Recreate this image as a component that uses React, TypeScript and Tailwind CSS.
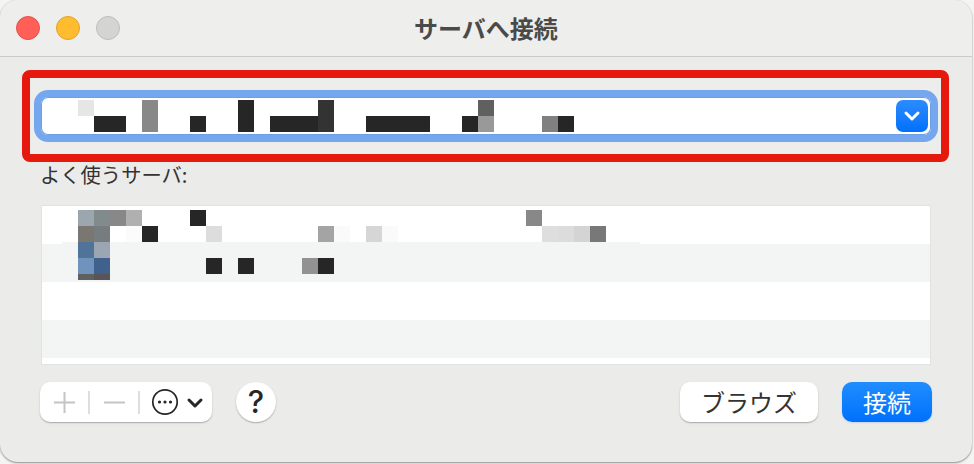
import { ChevronDown } from "lucide-react";

const DARK = "#262626";

// redacted server address, [x, y, width, colour] in 16px mosaic cells
const inputCells: [number, number, number, string][] = [
  [37, 3, 16, "#e6e6e6"],
  [101, 3, 16, "#888888"],
  [197, 3, 16, DARK],
  [277, 3, 16, "#333333"],
  [437, 3, 16, "#606060"],
  [53, 19, 32, DARK],
  [101, 19, 16, "#888888"],
  [149, 19, 16, DARK],
  [197, 19, 16, DARK],
  [229, 19, 48, DARK],
  [277, 19, 16, "#333333"],
  [325, 19, 64, DARK],
  [421, 19, 16, DARK],
  [437, 19, 16, "#999999"],
  [501, 19, 16, "#808080"],
  [517, 19, 16, DARK],
];

const listCells: [number, number, number, number, string][] = [
  [36, 4, 16, 16, "#9ca6ae"],
  [52, 4, 16, 16, "#828b8c"],
  [68, 4, 16, 16, "#888888"],
  [84, 4, 16, 16, "#b0b0b0"],
  [148, 4, 16, 16, DARK],
  [484, 4, 16, 16, "#888888"],
  [36, 20, 16, 16, "#7a7672"],
  [52, 20, 16, 16, "#767c80"],
  [84, 20, 16, 16, "#fbfbfb"],
  [100, 20, 16, 16, DARK],
  [164, 20, 16, 16, "#dddddd"],
  [276, 20, 16, 16, "#a4a4a4"],
  [292, 20, 16, 16, "#fafafa"],
  [324, 20, 16, 16, "#d6d6d6"],
  [340, 20, 16, 16, "#fafafa"],
  [500, 20, 16, 16, "#dedede"],
  [516, 20, 16, 16, "#dcdcdc"],
  [532, 20, 16, 16, "#d4d4d4"],
  [548, 20, 16, 16, "#787878"],
  [20, 36, 578, 2, "#f3f5f4"],
  [36, 36, 16, 16, "#50739a"],
  [52, 36, 16, 16, "#9ca6b2"],
  [36, 52, 16, 16, "#7093bd"],
  [52, 52, 16, 16, "#3e628c"],
  [164, 52, 16, 16, DARK],
  [196, 52, 16, 16, DARK],
  [260, 52, 16, 16, "#929292"],
  [276, 52, 16, 16, DARK],
  [36, 68, 16, 6, "#606060"],
  [52, 68, 16, 6, "#585458"],
];

const TrafficLight = ({ className }: { className: string }) => (
  <div className={`h-6 w-6 rounded-full border ${className}`} />
);

const App = () => {
  return (
    <div className="h-[464px] w-[974px] overflow-hidden bg-[#f4f4f4] font-['Noto_Sans_CJK_JP',sans-serif]">
      <div className="h-[462px] w-[972px] overflow-hidden rounded-[18px] bg-[#ebebea] shadow-[0_1px_2px_#8f8f8f,0_0_1px_#bdbdbd]">
        {/* title bar */}
        <div className="grid h-[57px] grid-cols-[1fr_auto_1fr] items-center border-b border-[#cbcbca] bg-[#eeeeed] pb-px">
          <div className="flex gap-4 pl-4">
            <TrafficLight className="border-[#e2524c] bg-[#ff5f57]" />
            <TrafficLight className="border-[#e2a12a] bg-[#febc2e]" />
            <TrafficLight className="border-[#bdbdbb] bg-[#d4d4d2]" />
          </div>
          <div className="text-[24px] leading-8 font-bold text-[#4a4a4a]">サーバへ接続</div>
          <div />
        </div>

        {/* address field, with the red annotation frame round it */}
        <div className="mt-[13px] ml-[22px] h-[92px] w-[927px] rounded-lg border-8 border-[#e6190f] bg-[#ededec] pt-3 pl-1">
          <div className="flex h-[52px] w-[904px] items-center justify-between rounded-[14px] border-[7px] border-[#74a7ed] bg-white pr-[3px] shadow-[inset_0_0_0_1px_#6b9fe6]">
            <svg width="540" height="32" viewBox="0 0 540 32" className="block" shapeRendering="crispEdges">
              {inputCells.map(([x, y, w, fill], i) => (
                <rect key={i} x={x} y={y - 3} width={w} height={16} fill={fill} />
              ))}
            </svg>
            <div className="flex h-8 w-8 items-center justify-center rounded-[7px] bg-gradient-to-b from-[#2a8cff] to-[#0070fb] shadow-[0_0_0_1px_#ffffff]">
              <ChevronDown size={24} strokeWidth={3} className="text-white" />
            </div>
          </div>
        </div>

        <div className="ml-10 h-[43px] text-[20.3px] leading-6 text-[#333333]">よく使うサーバ:</div>

        {/* favourite servers */}
        <div className="relative ml-[41px] h-[159px] w-[890px] overflow-hidden border-x border-t border-[#e2e2e1] bg-white">
          <div className="h-[38px]" />
          <div className="h-[38px] bg-[#f3f5f4]" />
          <div className="h-[38px]" />
          <div className="h-[38px] bg-[#f3f5f4]" />
          <svg
            width="620"
            height="80"
            viewBox="0 0 620 80"
            className="absolute top-0 left-0"
            shapeRendering="crispEdges"
          >
            {listCells.map(([x, y, w, h, fill], i) => (
              <rect key={i} x={x} y={y} width={w} height={h} fill={fill} />
            ))}
          </svg>
        </div>
        <div className="ml-[41px] h-px w-[890px] bg-[#e2e2e1]" />

        {/* bottom buttons */}
        <div className="mt-[17px] ml-10 flex w-[892px] items-center">
          <div className="flex h-10 w-[172px] items-center rounded-[10px] bg-white shadow-[0_1px_1.5px_#a8a8a8]">
            <div className="flex w-12 justify-center">
              <svg width="21" height="21" viewBox="0 0 21 21" stroke="#c4c4c4" strokeWidth="2">
                <path d="M0 10.5h21M10.5 0v21" />
              </svg>
            </div>
            <div className="h-[23px] w-0.5 bg-[#dedede]" />
            <div className="flex w-12 justify-center">
              <svg width="21" height="21" viewBox="0 0 21 21" stroke="#c4c4c4" strokeWidth="2">
                <path d="M0 10.5h21" />
              </svg>
            </div>
            <div className="h-[23px] w-0.5 bg-[#dedede]" />
            <div className="flex items-center">
              <svg width="28" height="28" viewBox="0 0 28 28" fill="none" className="ml-[11px]">
                <circle cx="14" cy="14" r="12.2" stroke="#262626" strokeWidth="1.7" />
                <circle cx="8.5" cy="14" r="1.6" fill="#262626" />
                <circle cx="14" cy="14" r="1.6" fill="#262626" />
                <circle cx="19.5" cy="14" r="1.6" fill="#262626" />
              </svg>
              <ChevronDown size={24} strokeWidth={3} className="mt-0.5 ml-1 text-[#262626]" />
            </div>
          </div>
          <div className="ml-6 flex h-10 w-10 items-center justify-center rounded-full bg-white font-['Inter',sans-serif] text-[31px] font-[450] text-[#262626] shadow-[0_1px_1.5px_#a8a8a8]">
            ?
          </div>
          <div className="ml-auto flex h-10 w-[138px] items-center justify-center rounded-[10px] bg-white text-[24px] text-[#333333] shadow-[0_1px_1.5px_#a8a8a8]">
            ブラウズ
          </div>
          <div className="ml-6 flex h-10 w-[90px] items-center justify-center rounded-[10px] bg-gradient-to-b from-[#1f8dff] to-[#0070fb] text-[24px] text-white shadow-[0_1px_2px_#c4d4ea]">
            接続
          </div>
        </div>
      </div>
    </div>
  );
};

export default App;
